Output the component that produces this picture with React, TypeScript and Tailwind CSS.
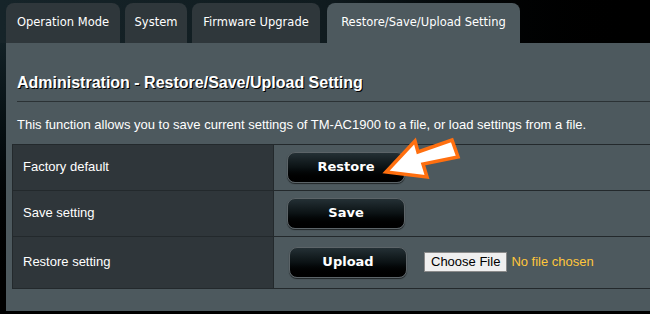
import React from "react";

const tabs = [
  { label: "Operation Mode", w: "w-[114px]" },
  { label: "System", w: "w-[62px]" },
  { label: "Firmware Upgrade", w: "w-[128px]" },
  { label: "Restore/Save/Upload Setting", w: "w-[193px] ml-[2px]" },
];

function Arrow() {
  return (
    <svg className="absolute left-[380px] top-[134px]" width="90" height="50" viewBox="380 134 90 50">
      <polygon
        points="386,172 415,141 418,152 452,140 458,157 423,164 427,177"
        fill="#ffffff"
        stroke="#ff6f0f"
        strokeWidth="3.5"
        strokeLinejoin="miter"
      />
    </svg>
  );
}

function DarkButton({ label }: { label: string }) {
  return (
    <button className="flex h-[31px] w-[118px] items-center justify-center rounded-[8px] border border-[#5c6468] bg-gradient-to-b from-[#243035] via-[#0b1214] to-black text-[13px] font-bold text-white [font-family:'DejaVu_Sans',sans-serif] shadow-[0_1px_1px_rgba(0,0,0,0.6)]">
      {label}
    </button>
  );
}

export default function App() {
  return (
    <div className="relative h-[314px] w-[650px] overflow-hidden bg-gradient-to-b from-[#182a30] to-black [font-family:'Liberation_Sans',Arial,sans-serif]">
      <div className="flex h-[43px] items-end gap-[5px] bg-gradient-to-r from-[#162429] via-[#101b1f] to-black pl-[6px]">
        {tabs.map((t, i) => {
          const active = i === tabs.length - 1;
          return (
            <div
              key={t.label}
              className={`flex h-[40px] items-center justify-center whitespace-nowrap rounded-t-[8px] text-[11.5px] text-white [font-family:'DejaVu_Sans',sans-serif] ${t.w} ${
                active ? "bg-[#4d595e]" : "bg-[#2f373b]"
              }`}
            >
              {t.label}
            </div>
          );
        })}
      </div>
      <div className="ml-[6px] h-[268px] bg-[#4d595e] pl-[6px] pt-[28px]">
        <h1 className="pl-[5px] text-[16px] font-bold text-white [text-shadow:1px_1px_0_#000]">
          Administration - Restore/Save/Upload Setting
        </h1>
        <div className="ml-[5px] mt-[6px] h-[2px] border-t border-[#2b3235] border-b-[#5b676c]" />
        <p className="mt-[12px] pl-[5px] text-[13px] text-white">
          This function allows you to save current settings of TM-AC1900 to a file, or load settings from a file.
        </p>
        <table className="mt-[9px] w-[640px] border-collapse text-[13px] text-white">
          <tbody>
            <tr className="h-[46px]">
              <td className="w-[261px] border border-[#23292c] bg-[#2f363a] pl-[10px]">Factory default</td>
              <td className="border border-[#23292c] pl-[13px]">
                <DarkButton label="Restore" />
              </td>
            </tr>
            <tr className="h-[46px]">
              <td className="border border-[#23292c] bg-[#2f363a] pl-[10px]">Save setting</td>
              <td className="border border-[#23292c] pl-[13px]">
                <DarkButton label="Save" />
              </td>
            </tr>
            <tr className="h-[52px]">
              <td className="border border-[#23292c] bg-[#2f363a] pl-[10px]">Restore setting</td>
              <td className="border border-[#23292c] pl-[15px]">
                <div className="flex items-center gap-[4px]">
                  <DarkButton label="Upload" />
                  <span className="ml-[13px] flex h-[20px] items-center border border-[#8a8a8a] bg-[#efefef] px-[6px] text-[13px] text-black">
                    Choose File
                  </span>
                  <span className="text-[13px] text-[#ffc63b]">No file chosen</span>
                </div>
              </td>
            </tr>
          </tbody>
        </table>
      </div>
      <Arrow />
    </div>
  );
}
